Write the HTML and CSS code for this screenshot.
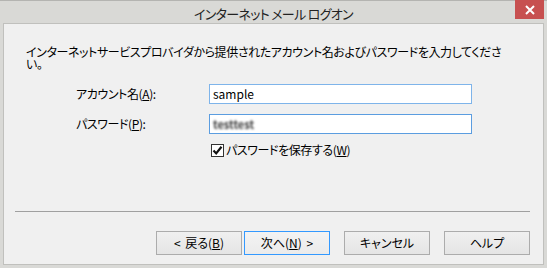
FILE: index.html
```
<!DOCTYPE html>
<html>
  <head>
    <title>インターネット メール ログオン</title>
    <meta http-equiv="content-type" content="text/html;charset=utf-8">
    <link rel="stylesheet" href="styles.css">
  </head>
  <body>
    <div class="window">
      <div class="titlebar">
        <span class="title">インターネット メール ログオン</span>
        <span class="close">
          <svg width="10" height="10" viewBox="0 0 10 10"><path d="M1 1 L9 9 M9 1 L1 9" stroke="#fff" stroke-width="2"/></svg>
        </span>
      </div>
      <div class="client">
        <p class="intro">
          <span class="line">インターネットサービスプロバイダから提供されたアカウント名およびパスワードを入力してくださ</span>
          <span class="line">い。</span>
        </p>

        <div class="form">
          <label class="label">アカウント名(<u>A</u>):</label>
          <div class="field"><span class="value">sample</span></div>

          <label class="label">パスワード(<u>P</u>):</label>
          <div class="field focus"><span class="value secret">testtest</span></div>

          <div></div>
          <div class="check">
            <span class="box">
              <svg width="11" height="11" viewBox="0 0 11 11"><path d="M1.5 5.5 L4.2 8.4 L9.5 1.8" fill="none" stroke="#111" stroke-width="2.2"/></svg>
            </span>
            <span>パスワードを保存する(<u>W</u>)</span>
          </div>
        </div>

        <div class="sep"></div>

        <div class="buttons">
          <div class="pair">
            <button class="btn">&lt; 戻る(<u>B</u>)</button>
            <button class="btn default">次へ(<u>N</u>) &gt;</button>
          </div>
          <button class="btn">キャンセル</button>
          <button class="btn">ヘルプ</button>
        </div>
      </div>
    </div>
  </body>
</html>
```

FILE: styles.css
```
body {
  margin: 0;
  font: 12px/14px "Noto Sans CJK JP", sans-serif;
  font-feature-settings: "palt";
  letter-spacing: -0.4px;
  color: #000;
}

.window {
  width: 547px;
  height: 268px;
  box-sizing: border-box;
  display: flex;
  flex-direction: column;
  padding: 0 3px 3px;
  background: #d9d9d6;
  border-top: 1px solid #b4b4b1;
}

.titlebar {
  position: relative;
  height: 22px;
  display: flex;
  align-items: center;
  justify-content: center;
}

.title {
  font-size: 13px;
  line-height: 16px;
  letter-spacing: -0.7px;
  color: #222;
  padding-top: 3px;
}

.close {
  position: absolute;
  top: -1px;
  right: 0;
  width: 29px;
  height: 19px;
  background: #c75050;
  display: flex;
  align-items: center;
  justify-content: center;
}

.client {
  flex: 1;
  background: #f0f0f0;
  border: 1px solid #c0c0bd;
  display: flex;
  flex-direction: column;
}

.intro {
  margin: 22px 0 0 22px;
  white-space: nowrap;
}

.intro .line {
  display: block;
  height: 12px;
  line-height: 12px;
}

.form {
  display: grid;
  grid-template-columns: 133px 263px;
  row-gap: 10px;
  align-items: center;
  margin: 14px 0 0 72px;
}

.label u,
.check u,
.btn u {
  text-underline-offset: 1px;
}

.field {
  height: 20px;
  box-sizing: border-box;
  background: #fff;
  border: 1px solid #7eb4ea;
  display: flex;
  align-items: center;
  padding-left: 3px;
}

.field.focus {
  border-color: #5b9de0;
}

.value {
  font-size: 12px;
  letter-spacing: 0;
}

.secret {
  display: inline-block;
  font-size: 11px;
  font-weight: bold;
  color: #3a3a3a;
  filter: blur(0.9px);
}

.check {
  display: flex;
  align-items: center;
  gap: 2px;
  margin: -1px 0 0 2px;
}

.box {
  width: 13px;
  height: 13px;
  box-sizing: border-box;
  border: 1px solid #333;
  background: #fff;
  display: flex;
  align-items: center;
  justify-content: center;
}

.sep {
  height: 1px;
  background: #a0a0a0;
  margin: 54px 13px 0 11px;
}

.buttons {
  display: flex;
  justify-content: flex-end;
  gap: 14px;
  margin: 19px 13px 0 0;
}

.pair {
  display: flex;
  gap: 2px;
}

.btn {
  width: 86px;
  height: 24px;
  padding: 0;
  font: inherit;
  font-feature-settings: "palt";
  letter-spacing: 0;
  word-spacing: 2px;
  color: #000;
  background: linear-gradient(#f0f0f0, #e5e5e5);
  border: 1px solid #acacac;
}

.btn.default {
  border-color: #3399ff;
  background: linear-gradient(#f3f3f3, #ebebeb);
}
```
